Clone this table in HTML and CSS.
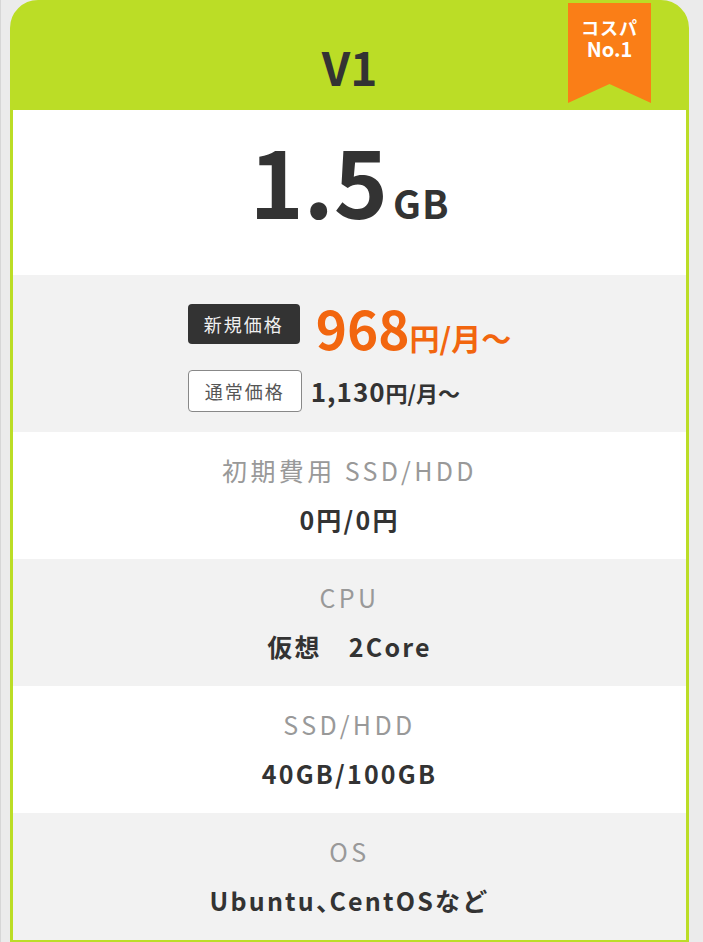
FILE: index.html
```html
<!DOCTYPE html>
<html lang="ja">
<head>
<meta charset="utf-8">
<title>V1 プラン</title>
<link rel="stylesheet" href="styles.css">
</head>
<body>
<div class="page">
  <div class="card">
    <div class="head">
      <h2 class="plan">V1</h2>
      <div class="ribbon"><span class="r1">コスパ</span><span class="r2">No.1</span></div>
    </div>
    <div class="capacity">
      <span class="cap-num">1.5</span><span class="cap-unit">GB</span>
    </div>
    <div class="price">
      <div class="price-grid">
        <div class="price-line">
          <span class="badge-new">新規価格</span>
          <span class="new-price"><span class="np-num">968</span><span class="np-unit">円/月～</span></span>
        </div>
        <div class="price-line line2">
          <span class="badge-normal">通常価格</span>
          <span class="normal-price"><span class="nr-num">1,130</span><span class="nr-unit">円/月～</span></span>
        </div>
      </div>
    </div>
    <div class="spec white">
      <div class="label">初期費用 SSD/HDD</div>
      <div class="value">0円/0円</div>
    </div>
    <div class="spec gray">
      <div class="label">CPU</div>
      <div class="value">仮想　2Core</div>
    </div>
    <div class="spec white">
      <div class="label">SSD/HDD</div>
      <div class="value">40GB/100GB</div>
    </div>
    <div class="spec gray">
      <div class="label">OS</div>
      <div class="value">Ubuntu<span class="tight">、</span>CentOSなど</div>
    </div>
  </div>
</div>
</body>
</html>
```

FILE: styles.css
```css
* { box-sizing: border-box; }
html, body {
  margin: 0;
  padding: 0;
  background: #ebebeb;
  font-family: "Noto Sans CJK JP", "Noto Sans", sans-serif;
  color: #333;
}
.page {
  width: 703px;
  height: 942px;
  overflow: hidden;
  border-left: 1px solid #d6d6d6;
  padding-left: 9px;
}
.card {
  width: 679px;
  border: 3px solid #bbdd26;
  border-radius: 28px 28px 0 0;
  background: #bbdd26;
  overflow: hidden;
}
.head {
  position: relative;
  height: 107px;
  display: flex;
  align-items: center;
  justify-content: center;
}
.plan {
  margin: 0;
  padding-top: 18px;
  font-size: 46px;
  font-weight: 700;
  line-height: 1;
  color: #333;
}
.ribbon {
  position: absolute;
  top: -3px;
  right: 35px;
  width: 83px;
  height: 103px;
  background: #fa7e17;
  clip-path: polygon(0 0, 100% 0, 100% 100%, 50% 81.5%, 0 100%);
  display: flex;
  flex-direction: column;
  align-items: center;
  padding-top: 17px;
  color: #fff;
  font-weight: 700;
  line-height: 21px;
}
.r1 { font-size: 18px; letter-spacing: 1px; }
.r2 { font-size: 20px; }
.capacity {
  height: 165px;
  background: #fff;
  display: flex;
  justify-content: center;
  align-items: baseline;
  padding-top: 23px;
}
.cap-num {
  font-size: 92px;
  font-weight: 700;
  line-height: 1;
  color: #333;
}
.cap-unit {
  font-size: 39px;
  font-weight: 700;
  line-height: 1;
  margin-left: 5px;
  letter-spacing: 1px;
}
.price {
  background: #f2f2f2;
  height: 157px;
  padding-top: 29px;
  display: flex;
  justify-content: center;
}
.price-grid {
  display: flex;
  flex-direction: column;
  align-items: flex-start;
  gap: 26px;
}
.price-line {
  display: flex;
  align-items: center;
  height: 40px;
}
.line2 { height: 42px; }
.badge-new {
  width: 112px;
  height: 40px;
  border-radius: 4px;
  background: #333;
  color: #f0f0f0;
  font-size: 18px;
  letter-spacing: 2px;
  display: flex;
  align-items: center;
  justify-content: center;
  margin-right: 16px;
}
.badge-normal {
  width: 114px;
  height: 42px;
  border-radius: 4px;
  border: 1px solid #888;
  background: #fff;
  color: #555;
  font-size: 18px;
  letter-spacing: 2px;
  display: flex;
  align-items: center;
  justify-content: center;
  margin-right: 9px;
}
.new-price {
  color: #f2660f;
  font-weight: 700;
  line-height: 1;
  display: flex;
  align-items: baseline;
  padding-top: 6px;
}
.np-num { font-size: 53px; }
.np-unit { font-size: 30px; }
.normal-price {
  color: #333;
  font-weight: 700;
  line-height: 1;
  display: flex;
  align-items: baseline;
}
.nr-num { font-size: 26px; letter-spacing: 1px; }
.nr-unit { font-size: 22px; }
.spec {
  height: 127px;
  padding-top: 20px;
  text-align: center;
}
.spec.white { background: #fff; }
.spec.gray { background: #f2f2f2; }
.label {
  font-size: 25px;
  line-height: 36px;
  color: #999;
  letter-spacing: 3.4px;
}
.value {
  margin-top: 13px;
  font-size: 25px;
  line-height: 36px;
  font-weight: 700;
  color: #333;
  letter-spacing: 2.2px;
}
.tight {
  font-feature-settings: "palt";
  letter-spacing: 1px;
}
```
